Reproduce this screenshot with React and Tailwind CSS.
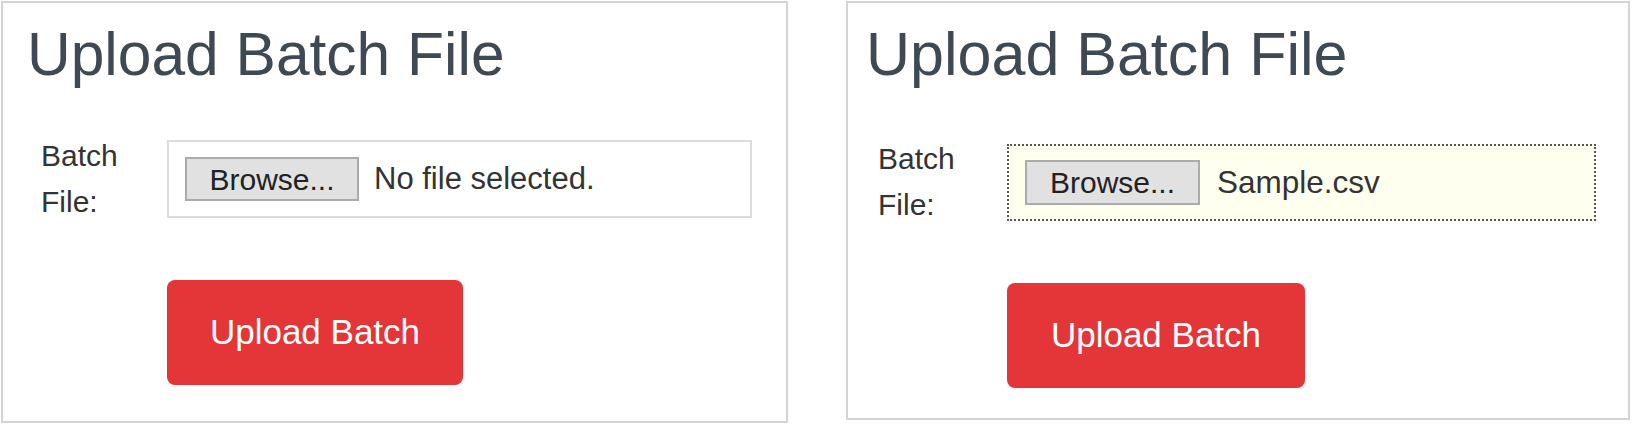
import React from "react";

const FONT = { fontFamily: '"Liberation Sans", Arial, sans-serif' };

function Panel({ variant }) {
  const right = variant === "right";
  return (
    <div
      className={
        right
          ? "w-[784px] h-[419px] border-2 border-[#d4d4d4] bg-white flex flex-col items-start"
          : "w-[787px] h-[422px] border-2 border-[#d4d4d4] bg-white flex flex-col items-start"
      }
    >
      <h1
        className={
          right
            ? "m-0 mt-[19px] ml-[18px] text-[61px] leading-[65px] font-normal text-[#3e4954] whitespace-nowrap"
            : "m-0 mt-[19px] ml-[24px] text-[60.5px] leading-[65px] font-normal text-[#3e4954] whitespace-nowrap"
        }
      >
        Upload Batch File
      </h1>
      <div
        className={
          right ? "flex items-start mt-[49px] ml-[30px]" : "flex items-start mt-[46px] ml-[38px]"
        }
      >
        <label
          className={
            right
              ? "w-[129px] text-[30px] leading-[46px] text-[#333333]"
              : "w-[126px] text-[30px] leading-[46px] text-[#333333]"
          }
        >
          Batch File:
        </label>
        <div
          className={
            right
              ? "mt-[8px] w-[589px] h-[77px] border-2 border-dotted border-[#555555] bg-[#fffff0] flex items-center pl-[16px]"
              : "mt-[7px] w-[585px] h-[78px] border-2 border-[#dcdcdc] bg-white flex items-center pl-[16px]"
          }
        >
          <div
            className={
              right
                ? "w-[175px] h-[45px] border-2 border-[#ababab] bg-[#e1e1e1] flex items-center justify-center text-[30px] text-[#222222]"
                : "w-[174px] h-[44px] border-2 border-[#ababab] bg-[#e1e1e1] flex items-center justify-center text-[30px] text-[#222222]"
            }
          >
            Browse...
          </div>
          <span
            className={
              right
                ? "ml-[17px] text-[31.5px] text-[#333333]"
                : "ml-[15px] text-[31px] text-[#333333]"
            }
          >
            {right ? "Sample.csv" : "No file selected."}
          </span>
        </div>
      </div>
      <button
        className={
          right
            ? "mt-[55px] ml-[159px] w-[298px] h-[105px] rounded-[8px] bg-[#e43638] text-white text-[35px] flex items-center justify-center"
            : "mt-[55px] ml-[164px] w-[296px] h-[105px] rounded-[8px] bg-[#e43638] text-white text-[35px] flex items-center justify-center"
        }
      >
        Upload Batch
      </button>
    </div>
  );
}

export default function App() {
  return (
    <div
      className="w-[1633px] h-[425px] bg-white flex items-start gap-[58px] pl-[1px] pt-[1px]"
      style={FONT}
    >
      <Panel variant="left" />
      <Panel variant="right" />
    </div>
  );
}
